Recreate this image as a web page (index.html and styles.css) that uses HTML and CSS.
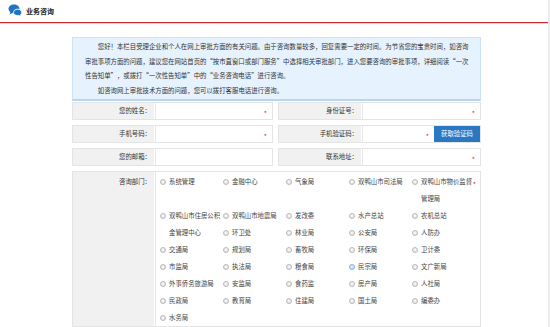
FILE: index.html
```html
<!DOCTYPE html>
<html lang="zh-CN">
<head>
<meta charset="utf-8">
<title>业务咨询</title>
<link rel="stylesheet" href="styles.css">
</head>
<body>
<div class="page">
  <div class="main">
    <header class="head">
      <svg class="head-icon" width="14" height="13" viewBox="0 0 14 13">
        <path d="M6 0.5C2.9 0.5 0.5 2.4 0.5 4.8c0 1.3 0.7 2.4 1.8 3.2L1.6 10.5l2.8-1.6c0.5 0.1 1 0.2 1.6 0.2 3.1 0 5.5-1.9 5.5-4.3S9.1 0.5 6 0.5z" fill="#1f74c4"/>
        <path d="M9.6 5.2c-2.3 0-4.1 1.4-4.1 3.2s1.8 3.2 4.1 3.2c0.4 0 0.8 0 1.2-0.1l2.3 1.2-0.6-2c0.8-0.6 1.3-1.4 1.3-2.3 0-1.8-1.9-3.2-4.200-3.2z" fill="#1f74c4" stroke="#fff" stroke-width="0.9"/>
      </svg>
      <h1 class="head-title">业务咨询</h1>
    </header>
    <section class="content">
      <div class="notice">
        <p>您好！本栏目受理企业和个人在网上审批方面的有关问题。由于咨询数量较多，回复需要一定的时间。为节省您的宝贵时间，如咨询审批事项方面的问题，建议您在网站首页的“按市直窗口或部门服务”中选择相关审批部门，进入您要咨询的审批事项，详细阅读“一次性告知单”，或拨打“一次性告知单”中的“业务咨询电话”进行咨询。</p>
        <p>如咨询网上审批技术方面的问题，您可以拨打客服电话进行咨询。</p>
      </div>
      <div class="form-grid">
        <div class="field"><label class="field-label">您的姓名：</label><div class="field-input"><span class="req">*</span></div></div>
        <div class="field field-r"><label class="field-label">身份证号：</label><div class="field-input"><span class="req">*</span></div></div>
        <div class="field"><label class="field-label">手机号码：</label><div class="field-input"><span class="req">*</span></div></div>
        <div class="field field-r"><label class="field-label">手机验证码：</label><div class="field-input field-code"><span class="req">*</span></div><button class="code-btn" type="button">获取验证码</button></div>
        <div class="field"><label class="field-label">您的邮箱：</label><div class="field-input"></div></div>
        <div class="field field-r"><label class="field-label">联系地址：</label><div class="field-input"><span class="req">*</span></div></div>
      </div>
      <div class="dept">
        <div class="dept-label">咨询部门：</div>
        <div class="dept-options">
          <div class="opt tall"><span class="radio"></span><span class="opt-text">系统管理</span></div>
          <div class="opt tall"><span class="radio"></span><span class="opt-text">金融中心</span></div>
          <div class="opt tall"><span class="radio"></span><span class="opt-text">气象局</span></div>
          <div class="opt tall"><span class="radio"></span><span class="opt-text">双鸭山市司法局</span></div>
          <div class="opt tall"><span class="radio"></span><span class="opt-text">双鸭山市物价监督管理局</span></div>
          <div class="opt tall"><span class="radio"></span><span class="opt-text">双鸭山市住房公积金管理中心</span></div>
          <div class="opt"><span class="radio"></span><span class="opt-text">双鸭山市地震局</span></div>
          <div class="opt"><span class="radio"></span><span class="opt-text">发改委</span></div>
          <div class="opt"><span class="radio"></span><span class="opt-text">水产总站</span></div>
          <div class="opt"><span class="radio"></span><span class="opt-text">农机总站</span></div>
          <div class="opt"><span class="radio"></span><span class="opt-text">环卫处</span></div>
          <div class="opt"><span class="radio"></span><span class="opt-text">林业局</span></div>
          <div class="opt"><span class="radio"></span><span class="opt-text">公安局</span></div>
          <div class="opt"><span class="radio"></span><span class="opt-text">人防办</span></div>
          <div class="opt"><span class="radio"></span><span class="opt-text">交通局</span></div>
          <div class="opt"><span class="radio"></span><span class="opt-text">规划局</span></div>
          <div class="opt"><span class="radio"></span><span class="opt-text">畜牧局</span></div>
          <div class="opt"><span class="radio"></span><span class="opt-text">环保局</span></div>
          <div class="opt"><span class="radio"></span><span class="opt-text">卫计委</span></div>
          <div class="opt"><span class="radio"></span><span class="opt-text">市监局</span></div>
          <div class="opt"><span class="radio"></span><span class="opt-text">执法局</span></div>
          <div class="opt"><span class="radio"></span><span class="opt-text">粮食局</span></div>
          <div class="opt"><span class="radio radio-hover"></span><span class="opt-text">民宗局</span></div>
          <div class="opt"><span class="radio"></span><span class="opt-text">文广新局</span></div>
          <div class="opt"><span class="radio"></span><span class="opt-text">外事侨务旅游局</span></div>
          <div class="opt"><span class="radio"></span><span class="opt-text">安监局</span></div>
          <div class="opt"><span class="radio"></span><span class="opt-text">食药监</span></div>
          <div class="opt"><span class="radio"></span><span class="opt-text">房产局</span></div>
          <div class="opt"><span class="radio"></span><span class="opt-text">人社局</span></div>
          <div class="opt"><span class="radio"></span><span class="opt-text">民政局</span></div>
          <div class="opt"><span class="radio"></span><span class="opt-text">教育局</span></div>
          <div class="opt"><span class="radio"></span><span class="opt-text">住建局</span></div>
          <div class="opt"><span class="radio"></span><span class="opt-text">国土局</span></div>
          <div class="opt"><span class="radio"></span><span class="opt-text">编委办</span></div>
          <div class="opt"><span class="radio"></span><span class="opt-text">水务局</span></div>
        </div>
        <span class="dept-req">*</span>
      </div>
    </section>
  </div>
  <div class="strip"></div>
</div>
</body>
</html>
```

FILE: styles.css
```css
html, body {
  margin: 0;
  padding: 0;
  background: #fff;
}
body {
  font-family: "Noto Sans CJK SC", "Microsoft YaHei", sans-serif;
  color: #333;
  overflow: hidden;
  height: 327px;
}
.page {
  display: flex;
  height: 327px;
}
.main {
  flex: 1;
  min-width: 0;
}
.strip {
  width: 2px;
  background: #ececec;
}
.head {
  height: 22px;
  display: flex;
  align-items: center;
  padding-left: 8px;
  border-bottom: 1px solid #d2262c;
  box-shadow: 0 1px 0 #f4d0d0;
}
.head-icon {
  display: block;
  margin-top: -1px;
}
.head-title {
  margin: 0 0 0 4px;
  font-size: 7px;
  font-weight: 700;
  color: #222;
  line-height: 1;
}
.content {
  margin-left: 72px;
  width: 409px;
  padding-top: 14px;
}
.notice {
  background: #e6f2fe;
  border: 1px solid #cde2f7;
  border-bottom: 2px solid #b8d5f1;
  padding: 2px 10px 1px 12px;
  font-size: 6.4px;
  line-height: 14.5px;
  color: #333;
}
.notice p {
  margin: 0;
  text-indent: 2em;
}
.form-grid {
  margin-top: 1px;
  display: grid;
  grid-template-columns: 201px 203px;
  column-gap: 5px;
  row-gap: 5px;
}
.field {
  display: flex;
  height: 18px;
  box-sizing: border-box;
  border: 1px solid #e4e4e4;
  background: #fff;
}
.field-label {
  width: 81px;
  flex: none;
  background: #f1f1f1;
  font-size: 6.4px;
  line-height: 16px;
  text-align: right;
  padding-right: 3px;
  box-sizing: border-box;
  color: #333;
}
.field-r .field-label {
  width: 82px;
}
.field-input {
  flex: 1;
  margin-left: 1px;
  border-left: 1px solid #e6e6e6;
  display: flex;
  justify-content: flex-end;
  align-items: center;
  padding-right: 5px;
}
.field-code {
  flex: 0 0 66px;
}
.req {
  color: #e8202a;
  font-size: 7px;
  line-height: 1;
  margin-top: 4px;
}
.code-btn {
  margin: 0;
  width: 46px;
  height: 16px;
  border: none;
  background: #2b78c2;
  color: #fff;
  font-family: inherit;
  font-size: 6.4px;
  padding: 0;
  line-height: 16px;
}
.dept {
  position: relative;
  margin-top: 5px;
  display: flex;
  border: 1px solid #e4e4e4;
  height: 156px;
  box-sizing: border-box;
}
.dept-label {
  width: 81px;
  flex: none;
  background: #f1f1f1;
  font-size: 6.4px;
  line-height: 17px;
  padding-top: 1px;
  text-align: right;
  padding-right: 3px;
  box-sizing: border-box;
}
.dept-options {
  margin-left: 1px;
  border-left: 1px solid #e6e6e6;
  padding: 1px 0 0 4px;
  display: grid;
  grid-template-columns: repeat(5, 63px);
  grid-auto-rows: 17px;
  align-content: start;
}
.opt {
  display: flex;
  align-items: flex-start;
  font-size: 6.4px;
  line-height: 17px;
  color: #444;
}
.opt.tall {
  grid-row: span 2;
}
.radio {
  flex: none;
  width: 4px;
  height: 4px;
  margin-top: 6px;
  margin-right: 3px;
  border: 1px solid #b9b9b9;
  border-radius: 50%;
  background: radial-gradient(circle at 50% 40%, #fafafa, #dcdcdc);
}
.radio-hover {
  border-color: #7fb6e0;
  background: radial-gradient(circle at 50% 40%, #e8f3fc, #a9d0ef);
}
.opt-text {
  width: 52px;
  word-break: break-all;
}
.dept-req {
  position: absolute;
  right: 4px;
  top: 9px;
  color: #e8202a;
  font-size: 7px;
  line-height: 1;
}
```
